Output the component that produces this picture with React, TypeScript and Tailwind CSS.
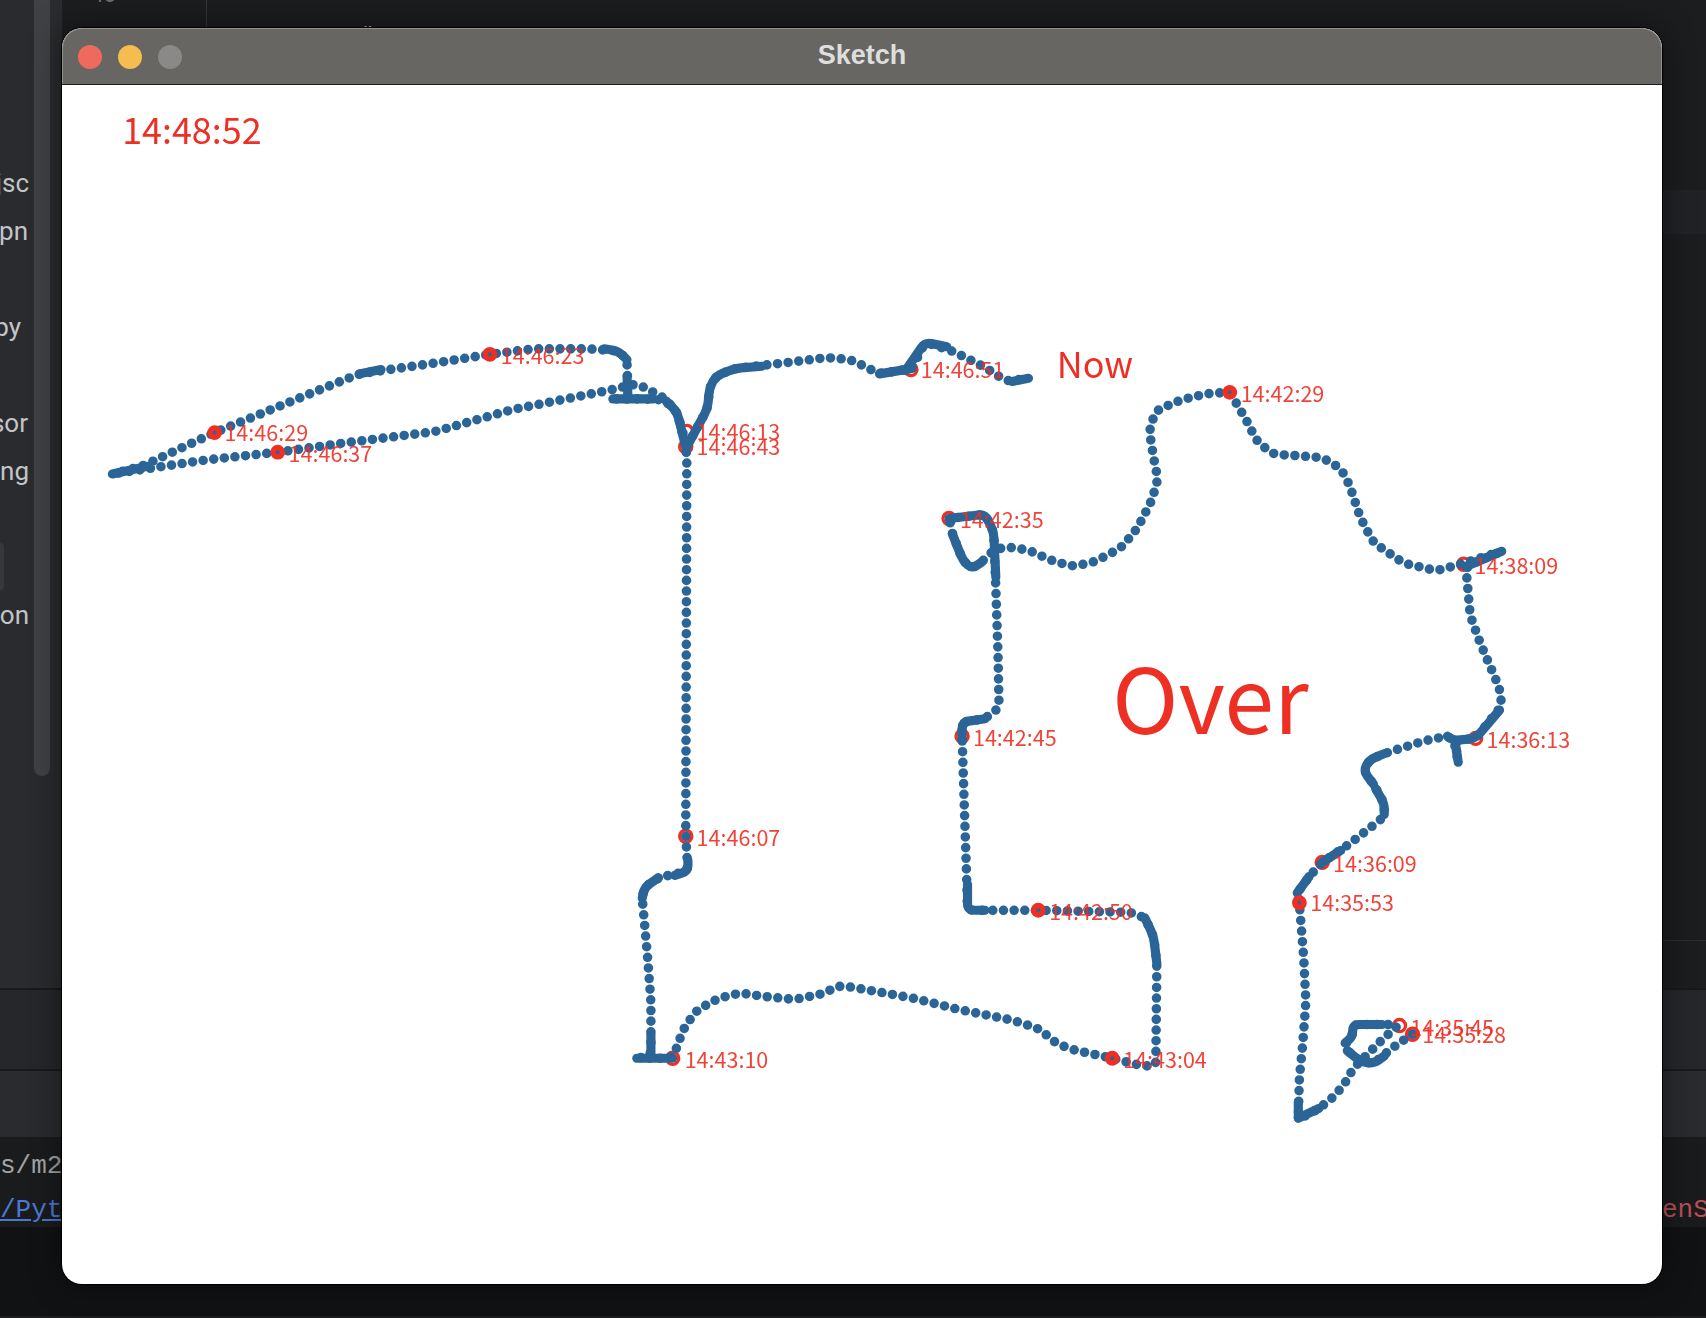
const BLUE = '#2b6597'
const RED = '#ee2f24'
const LABEL_FONT = '"Noto Sans CJK SC", "Noto Sans", sans-serif'

// traced route, in the 1568-wide coordinates the trace was read from
const route =
  '1298,950 1280,962 1262,977 1250,975 1238,965 1236,958 1243,952 1243,941 1286,941 1270,955 1255,970 1243,982 1236,995 1225,1008 1212,1018 1200,1025 1193,1027 1194,990 1197,960 1200,920 1198,880 1194,830 1192,820 1203,805 1215,792 1240,775 1272,750 1272,738 1262,720 1253,708 1258,698 1275,691 1310,680 1330,676 1336,680 1340,700 1337,680 1356,678 1380,648 1378,632 1360,590 1351,565 1347,520 1380,506 1345,517 1320,524 1290,517 1262,498 1250,475 1240,445 1232,430 1215,420 1190,418 1170,417 1155,405 1145,385 1130,360 1110,361 1085,367 1062,377 1056,395 1060,420 1064,440 1058,460 1045,485 1030,503 1005,516 985,520 965,514 945,505 925,502 913,505 902,516 893,522 885,515 875,490 872,476 905,472 913,488 915,540 917,600 918,650 905,660 884,663 884,676 886,740 888,800 889,836 954,836 1040,838 1052,843 1060,860 1063,885 1062,980 1045,978 1022,972 985,964 970,958 955,945 930,937 880,927 840,917 790,908 772,905 755,913 730,918 700,915 680,912 660,917 640,928 628,945 618,972 585,972 598,970 598,920 595,880 590,825 592,815 605,806 632,800 630,768 631,420 630,410 622,378 610,367 590,366 563,366 577,366 576,330 568,322 540,320 490,320 450,325 400,333 330,343 300,355 197,397 130,428 103,435 190,422 255,415 320,406 400,396 470,376 560,358 585,352 610,365 622,378 631,410 650,375 652,355 658,345 675,338 720,333 760,328 782,330 808,343 838,338 850,314 875,322 905,337 925,350 945,347'

const thick = [
  '1236,958 1243,952 1243,941 1270,941',
  '1238,965 1250,975 1262,977 1272,970',
  '1193,1027 1193,1012',
  '1193,1027 1212,1018',
  '1192,820 1203,805',
  '1215,792 1232,781',
  '1262,720 1253,708 1258,698 1272,692',
  '1272,748 1272,738 1264,724',
  '1330,676 1336,680 1356,678 1378,652',
  '1337,680 1340,700',
  '1347,520 1380,506',
  '872,476 905,472 913,488 915,530',
  '902,516 893,522 885,515 875,490',
  '905,660 884,663 884,680',
  '889,812 889,836 905,836',
  '1052,843 1060,860 1063,885',
  '585,972 618,972',
  '598,970 598,950',
  '590,825 592,815 605,806',
  '620,804 632,800 632,790',
  '630,410 622,378 612,368',
  '631,410 650,375 652,355 658,345 675,338 700,336',
  '563,366 600,366',
  '577,366 576,345',
  '576,330 568,322 555,320',
  '330,343 350,339',
  '103,435 135,428',
  '808,343 838,338',
  '832,340 850,314 870,318',
  '930,350 945,347',
]

// round each corner a little so the trace reads as a hand-drawn line
function smooth(points: string, r = 6) {
  const pts = points.split(' ').map((p) => p.split(',').map(Number))
  let d = `M${pts[0][0]} ${pts[0][1]}`
  for (let i = 1; i < pts.length - 1; i++) {
    const [px, py] = pts[i - 1]
    const [x, y] = pts[i]
    const [nx, ny] = pts[i + 1]
    const l1 = Math.hypot(x - px, y - py)
    const l2 = Math.hypot(nx - x, ny - y)
    const c1 = Math.min(r, l1 / 2)
    const c2 = Math.min(r, l2 / 2)
    d += ` L${x - ((x - px) / l1) * c1} ${y - ((y - py) / l1) * c1}`
    d += ` Q${x} ${y} ${x + ((nx - x) / l2) * c2} ${y + ((ny - y) / l2) * c2}`
  }
  const last = pts[pts.length - 1]
  return `${d} L${last[0]} ${last[1]}`
}

const markers: { x: number; y: number; t: string; lx: number; ly: number; top?: boolean }[] = [
  { x: 450, y: 325, t: '14:46:23', lx: 460, ly: 334, top: true },
  { x: 197, y: 397, t: '14:46:29', lx: 206, ly: 405, top: true },
  { x: 255, y: 415, t: '14:46:37', lx: 265, ly: 424, top: true },
  { x: 631, y: 396, t: '14:46:13', lx: 640, ly: 404 },
  { x: 630, y: 410, t: '14:46:43', lx: 640, ly: 418 },
  { x: 837, y: 339, t: '14:46:51', lx: 846, ly: 347 },
  { x: 1130, y: 360, t: '14:42:29', lx: 1140, ly: 369, top: true },
  { x: 872, y: 476, t: '14:42:35', lx: 882, ly: 485 },
  { x: 1345, y: 518, t: '14:38:09', lx: 1355, ly: 527 },
  { x: 1356, y: 678, t: '14:36:13', lx: 1366, ly: 687 },
  { x: 884, y: 676, t: '14:42:45', lx: 894, ly: 685 },
  { x: 630, y: 768, t: '14:46:07', lx: 640, ly: 777 },
  { x: 1215, y: 792, t: '14:36:09', lx: 1225, ly: 801 },
  { x: 1194, y: 829, t: '14:35:53', lx: 1204, ly: 837, top: true },
  { x: 954, y: 836, t: '14:42:50', lx: 964, ly: 845, top: true },
  { x: 1286, y: 942, t: '14:35:45', lx: 1296, ly: 952 },
  { x: 1298, y: 950, t: '14:35:28', lx: 1307, ly: 958 },
  { x: 618, y: 972, t: '14:43:10', lx: 629, ly: 981 },
  { x: 1022, y: 972, t: '14:43:04', lx: 1032, ly: 981, top: true },
]

const fileRows = [
  { name: 'jsc', pr: 'pr-[5px]' },
  { name: 'pn', pr: 'pr-[6px]' },
  { name: '', pr: '' },
  { name: 'py', pr: 'pr-[13px]' },
  { name: '', pr: '' },
  { name: 'sor', pr: 'pr-[6px]' },
  { name: 'ng', pr: 'pr-[5px]' },
  { name: '', pr: '' },
  { name: '', pr: '', chip: true },
  { name: 'on', pr: 'pr-[5px]' },
]

function Sketch() {
  return (
    <svg viewBox="57 77.5 1470 1102" className="block h-[1199px] w-[1600px] blur-[0.4px]">
      {markers.filter((m) => !m.top).map((m) => (
        <circle key={m.t} cx={m.x} cy={m.y} r="5.6" fill="none" stroke={RED} strokeWidth="3" />
      ))}
      <path
        d={smooth(route)}
        fill="none"
        stroke={BLUE}
        strokeWidth="8.8"
        strokeLinecap="round"
        strokeLinejoin="round"
        strokeDasharray="0 9.8"
      />
      {thick.map((p) => (
        <path
          key={p}
          d={smooth(p)}
          fill="none"
          stroke={BLUE}
          strokeWidth="8.4"
          strokeLinecap="round"
          strokeLinejoin="round"
        />
      ))}
      {markers.filter((m) => m.top).map((m) => (
        <g key={m.t}>
          <circle cx={m.x} cy={m.y} r="6.8" fill={RED} />
          <circle cx={m.x} cy={m.y} r="1.8" fill={BLUE} />
        </g>
      ))}
      <g fill={RED} fontFamily={LABEL_FONT}>
        {markers.map((m) => (
          <text key={m.t} x={m.lx} y={m.ly} fontSize="19.8" opacity="0.9">
            {m.t}
          </text>
        ))}
        <text x="112" y="132" fontSize="33">14:48:52</text>
        <text x="971" y="347" fontSize="33">Now</text>
        <text x="1022" y="674" fontSize="82">Over</text>
      </g>
    </svg>
  )
}

export default function App() {
  return (
    <div className="relative h-[1318px] w-[1706px] overflow-hidden bg-[#1c1d1f] font-['Inter',sans-serif]">
      {/* editor behind the window */}
      <div className="flex h-[990px] border-b-2 border-[#18191b]">
        <div className="flex w-[62px] shrink-0 bg-[#2a2b2e]">
          <div className="w-[34px] shrink-0 overflow-hidden pt-[159px] font-['Roboto',sans-serif]">
            {fileRows.map((row, i) => (
              <div
                key={i}
                className={`flex h-[48px] justify-end whitespace-nowrap text-[26px] leading-[48px] text-[#c3c4c7] ${row.pr}`}
              >
                {row.name}
                {row.chip && <div className="mr-auto h-[47px] w-[4px] rounded-r-md bg-[#37383b]" />}
              </div>
            ))}
          </div>
          <div className="h-[776px] w-[16px] shrink-0 rounded-b-lg bg-[#404144]" />
        </div>
        <div className="flex-1">
          <div className="flex h-[30px] items-start overflow-hidden">
            <span className="ml-[32px] mt-[-19px] text-[22px] leading-[26px] text-[#6c6d70]">10</span>
            <span className="ml-[89px] h-[30px] w-px bg-[#35363a]" />
            <span className="ml-[153px] mt-[22px] text-[22px] leading-[26px] text-[#a9aaad]">()</span>
          </div>
          <div className="mt-[160px] h-[44px] bg-[#212226]" />
          <div className="mt-[706px] h-px bg-[#2b2c2f]" />
        </div>
      </div>
      <div className="h-[81px] border-b-2 border-[#18191b] bg-[#26272a]" />
      <div className="h-[66px] bg-[#2a2b2e]" />
      <div className="flex h-[90px] bg-[#1a1b1d] pt-[7px] font-['Liberation_Mono',monospace] text-[26px] leading-[44px]">
        <div className="w-[62px] overflow-hidden whitespace-nowrap">
          <div className="text-[#a3a3a3]">s/m2</div>
          <div className="text-[#4c78d4] underline">/Pyt</div>
        </div>
        <div className="ml-auto mt-[44px] w-[44px] overflow-hidden whitespace-nowrap text-[#b84f59]">enS</div>
      </div>
      <div className="h-[89px] bg-[#111214]" />

      {/* the sketch window */}
      <div className="absolute left-[62px] top-[28px] w-[1600px] overflow-hidden rounded-[20px] bg-white shadow-[0_0_0_1px_#000,0_0_30px_rgba(0,0,0,0.5)]">
        <div className="relative flex h-[56px] items-center gap-4 rounded-t-[20px] border-x border-t border-[#92918e] bg-[#686663] pl-[15px]">
          <span className="h-6 w-6 rounded-full bg-[#ee6a5f]" />
          <span className="h-6 w-6 rounded-full bg-[#f5bd4f]" />
          <span className="h-6 w-6 rounded-full bg-[#8a8987]" />
          <span className="absolute inset-x-0 top-[10px] text-center font-['Liberation_Sans',sans-serif] text-[27px] font-bold leading-[32px] text-[#dededc]">
            Sketch
          </span>
        </div>
        <div className="h-px bg-[#1c1c1c]" />
        <Sketch />
      </div>
    </div>
  )
}
